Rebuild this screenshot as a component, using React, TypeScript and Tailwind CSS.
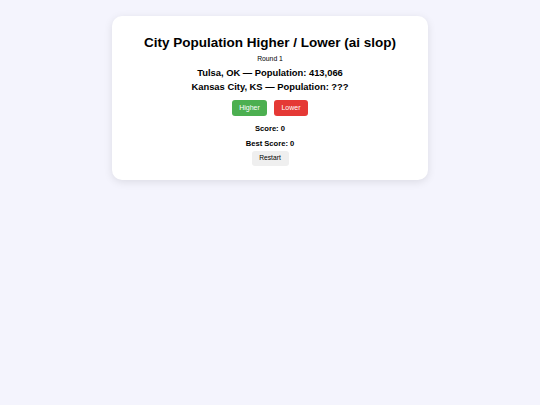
export default function App() {
  return (
    <div className="min-h-[405px] w-full bg-[#f4f4fd] pt-4 font-['Liberation_Sans',Arial,sans-serif] text-black">
      <div className="mx-auto flex w-[316px] flex-col items-center rounded-[10px] bg-white pt-[19px] pb-[14px] shadow-[0_2px_8px_rgba(0,0,0,0.1)]">
        <h1 className="text-[13.5px] font-bold leading-[16px]">City Population Higher / Lower (ai slop)</h1>
        <div className="mt-[3px] text-[6.8px] leading-[10px]">Round 1</div>
        <div className="mt-[3px] text-[9.4px] font-bold leading-[12px]">Tulsa, OK — Population: 413,066</div>
        <div className="mt-[2px] text-[9.4px] font-bold leading-[12px]">Kansas City, KS — Population: ???</div>
        <div className="mt-[7px] flex gap-[7px]">
          <button className="h-[16px] w-[35px] rounded-[3px] bg-[#4caf50] text-[7px] text-white">Higher</button>
          <button className="h-[16px] w-[34px] rounded-[3px] bg-[#e53935] text-[7px] text-white">Lower</button>
        </div>
        <div className="mt-[8px] text-[7.6px] font-bold leading-[10px]">Score: 0</div>
        <div className="mt-[5px] text-[7.6px] font-bold leading-[10px]">Best Score: 0</div>
        <button className="mt-[2px] h-[15px] w-[37px] rounded-[3px] bg-[#efefef] text-[6.7px]">Restart</button>
      </div>
    </div>
  );
}
